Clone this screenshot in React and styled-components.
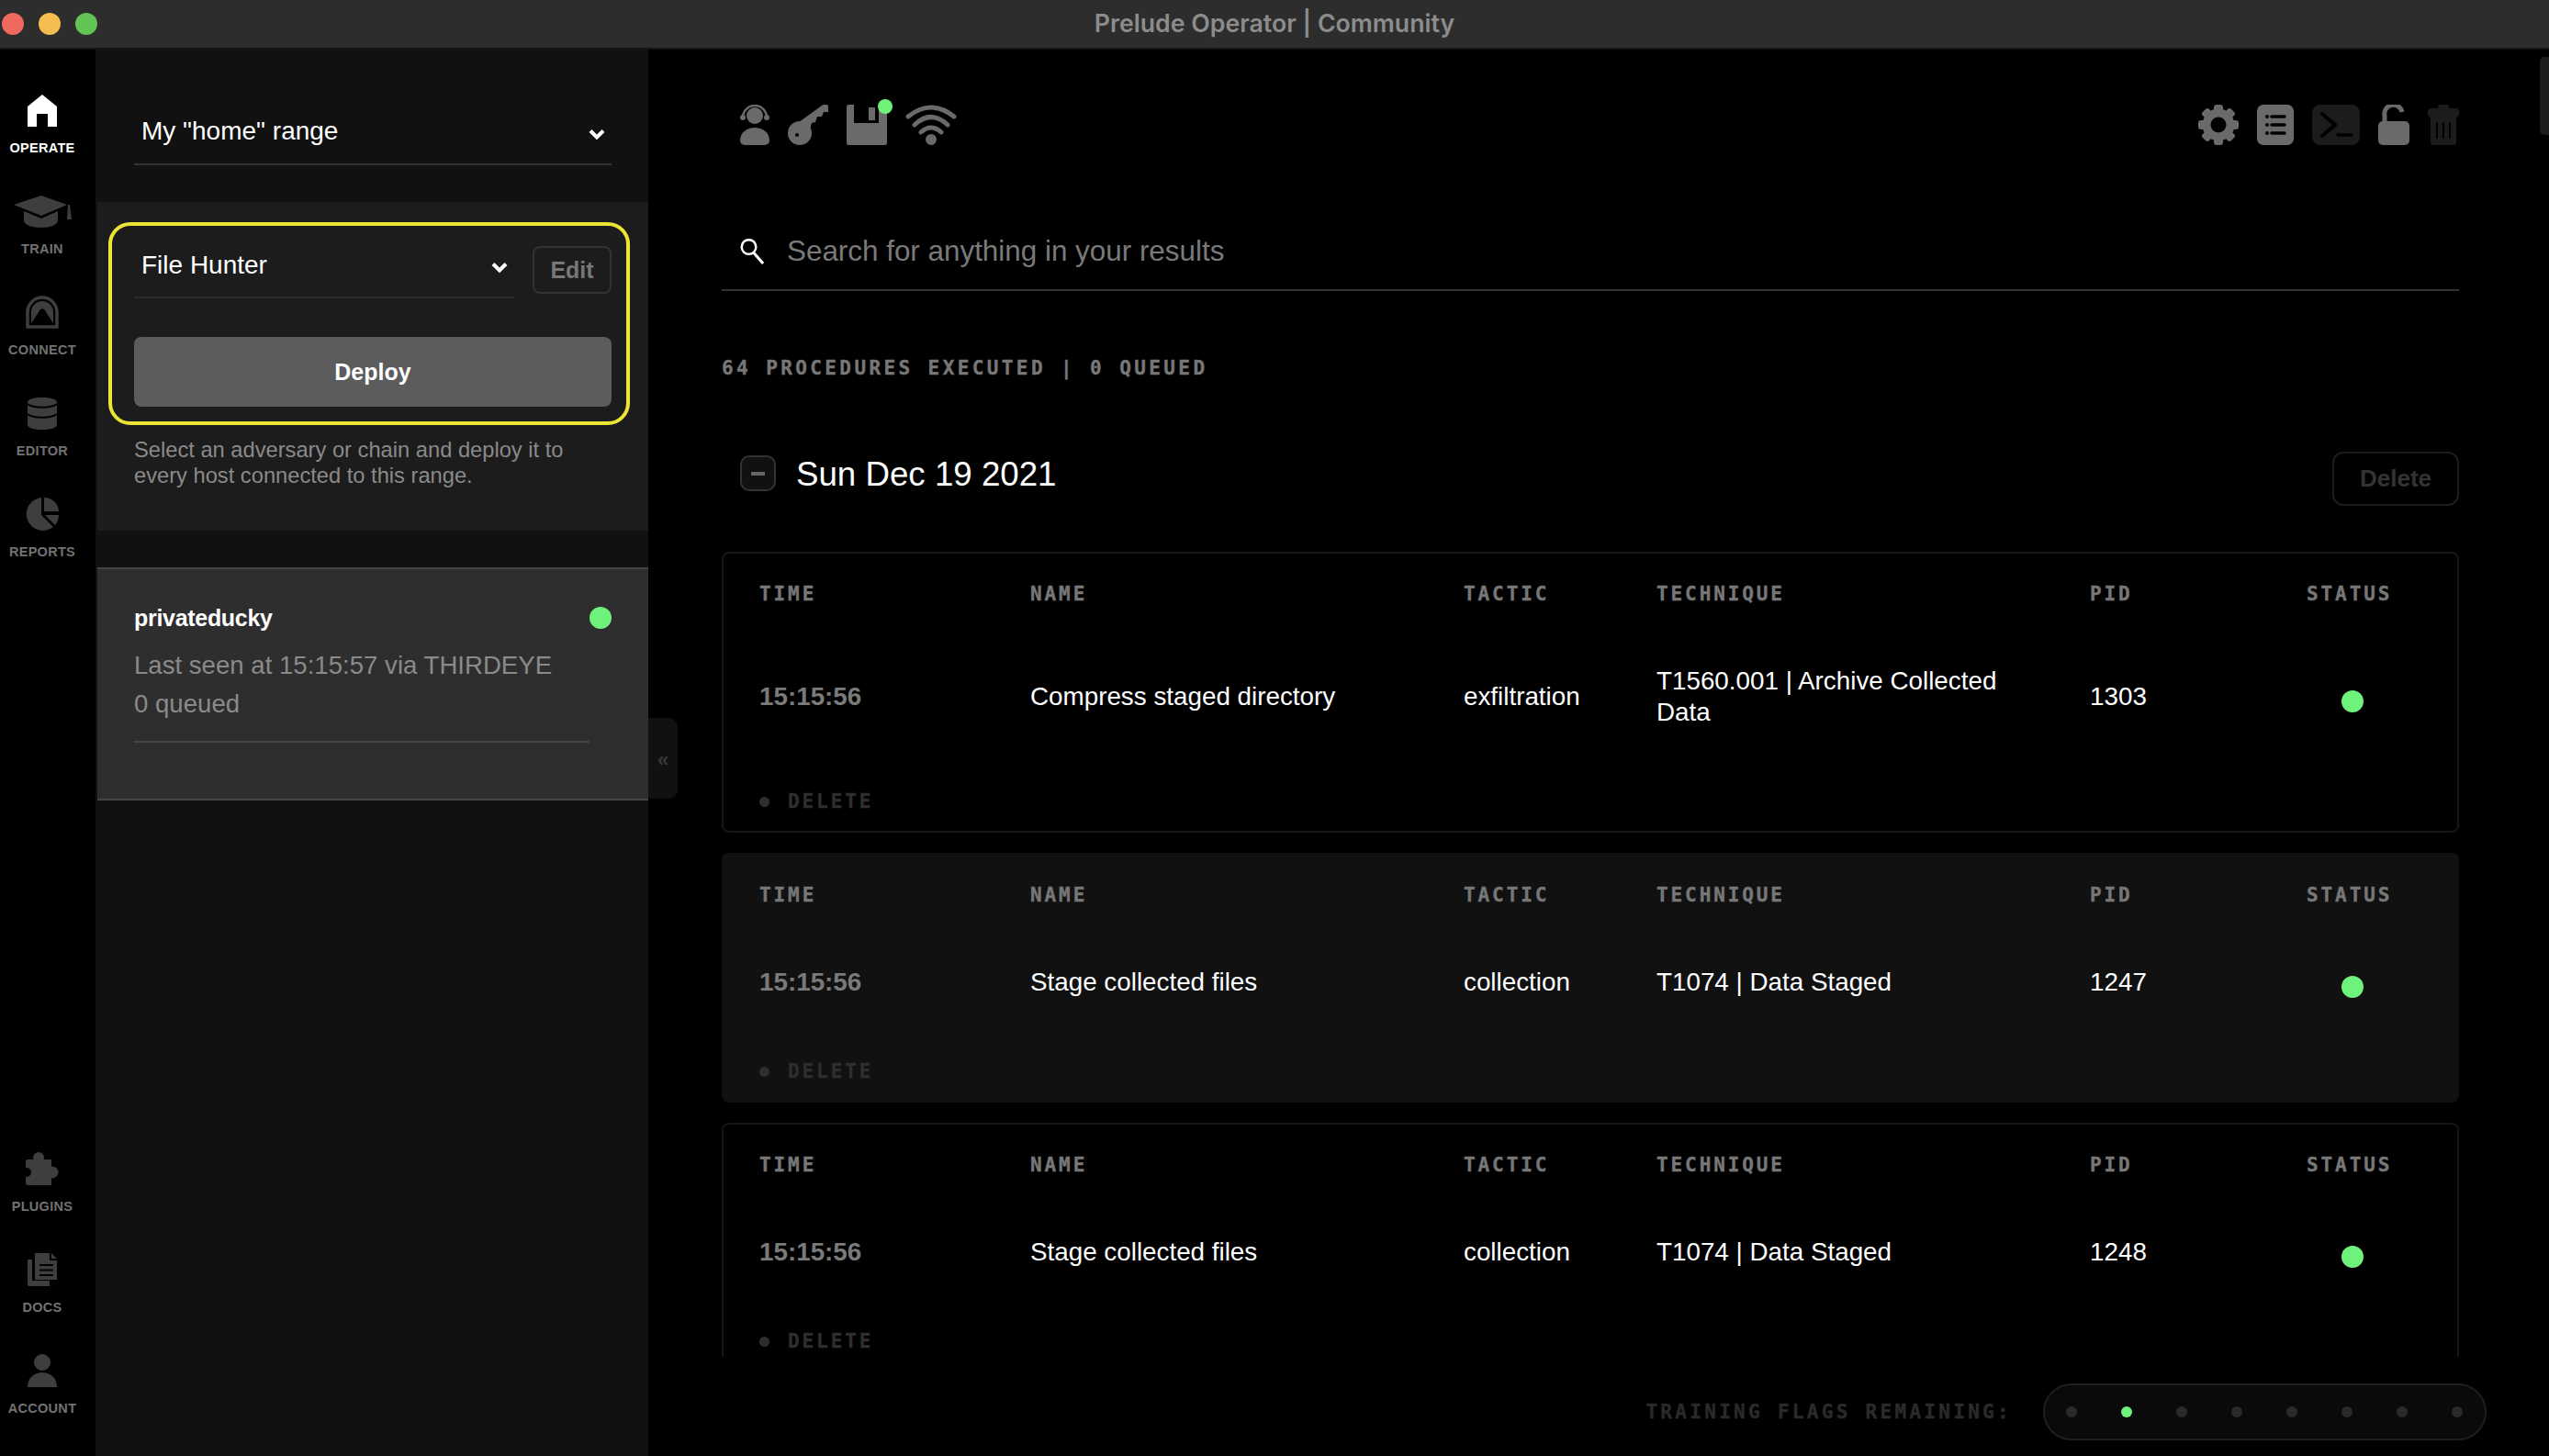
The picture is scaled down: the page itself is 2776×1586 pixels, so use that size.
import React from 'react'
import styled, { createGlobalStyle } from 'styled-components'

const GRAY = '#6a6a6a'
const DIM = '#1c1c1c'
const NAV = '#3e3e3e'

const navTop = [
  { label: 'OPERATE', icon: HomeIcon, active: true },
  { label: 'TRAIN', icon: CapIcon },
  { label: 'CONNECT', icon: TunnelIcon },
  { label: 'EDITOR', icon: DbIcon },
  { label: 'REPORTS', icon: PieIcon },
]

const navBottom = [
  { label: 'PLUGINS', icon: PuzzleIcon },
  { label: 'DOCS', icon: DocsIcon },
  { label: 'ACCOUNT', icon: PersonIcon },
]

const links = [
  { time: '15:15:56', name: 'Compress staged directory', tactic: 'exfiltration', technique: 'T1560.001 | Archive Collected Data', pid: '1303' },
  { time: '15:15:56', name: 'Stage collected files', tactic: 'collection', technique: 'T1074 | Data Staged', pid: '1247', shaded: true },
  { time: '15:15:56', name: 'Stage collected files', tactic: 'collection', technique: 'T1074 | Data Staged', pid: '1248' },
]

function App() {
  return (
    <Window>
      <GlobalStyle />
      <TitleBar>
        <Lights>
          <Light color="#ee6a5f" />
          <Light color="#f5bd4f" />
          <Light color="#61c454" />
        </Lights>
        <WindowTitle>Prelude Operator | Community</WindowTitle>
      </TitleBar>
      <Body>
        <Sidebar>
          <NavGroup>
            {navTop.map(item => <NavEntry key={item.label} {...item} />)}
          </NavGroup>
          <NavGroup>
            {navBottom.map(item => <NavEntry key={item.label} {...item} />)}
          </NavGroup>
        </Sidebar>

        <Panel>
          <RangeSection>
            <Select>
              My "home" range
              <Chevron />
            </Select>
          </RangeSection>
          <DeploySection>
            <Highlight>
              <ChainRow>
                <ChainSelect>
                  File Hunter
                  <Chevron />
                </ChainSelect>
                <EditButton>Edit</EditButton>
              </ChainRow>
              <DeployButton>Deploy</DeployButton>
            </Highlight>
            <Hint>Select an adversary or chain and deploy it to every host connected to this range.</Hint>
          </DeploySection>
          <HostCard>
            <HostHead>
              <HostName>privateducky</HostName>
              <HostDot />
            </HostHead>
            <HostLine>Last seen at 15:15:57 via THIRDEYE</HostLine>
            <HostLine>0 queued</HostLine>
            <HostRule />
          </HostCard>
          <CollapseTab>«</CollapseTab>
        </Panel>

        <Main>
          <ScrollThumb />
          <Toolbar>
            <ToolGroup>
              <HeadsetIcon />
              <KeyIcon />
              <SaveWrap>
                <FloppyIcon />
                <SaveDot />
              </SaveWrap>
              <WifiIcon />
            </ToolGroup>
            <ToolGroup>
              <GearIcon />
              <ListIcon />
              <TerminalIcon />
              <LockIcon />
              <TrashIcon />
            </ToolGroup>
          </Toolbar>

          <SearchRow>
            <SearchIcon />
            <SearchText>Search for anything in your results</SearchText>
          </SearchRow>

          <Stats>64 PROCEDURES EXECUTED | 0 QUEUED</Stats>

          <DateRow>
            <Toggle><ToggleBar /></Toggle>
            <DateTitle>Sun Dec 19 2021</DateTitle>
            <DeleteDay>Delete</DeleteDay>
          </DateRow>

          <Feed>
            {links.map(link => (
              <LinkCard key={link.pid} $shaded={link.shaded}>
                <Grid>
                  <Label>TIME</Label>
                  <Label>NAME</Label>
                  <Label>TACTIC</Label>
                  <Label>TECHNIQUE</Label>
                  <Label>PID</Label>
                  <Label>STATUS</Label>
                </Grid>
                <ValueGrid>
                  <TimeCell>{link.time}</TimeCell>
                  <Cell>{link.name}</Cell>
                  <Cell>{link.tactic}</Cell>
                  <TechniqueCell>{link.technique}</TechniqueCell>
                  <Cell>{link.pid}</Cell>
                  <StatusCell><StatusDot /></StatusCell>
                </ValueGrid>
                <DeleteLink><DeleteBullet />DELETE</DeleteLink>
              </LinkCard>
            ))}
          </Feed>

          <Footer>
            <FlagsLabel>TRAINING FLAGS REMAINING:</FlagsLabel>
            <FlagsPill>
              {[0, 1, 2, 3, 4, 5, 6, 7].map(i => <Flag key={i} $on={i === 1} />)}
            </FlagsPill>
          </Footer>
        </Main>
      </Body>
    </Window>
  )
}

export default App

function NavEntry({ label, icon: Icon, active }) {
  return (
    <NavItem>
      <NavIconBox><Icon color={active ? '#ffffff' : NAV} /></NavIconBox>
      <NavLabel $active={active}>{label}</NavLabel>
    </NavItem>
  )
}

function Chevron() {
  return (
    <ChevronSvg width="18" height="12" viewBox="0 0 18 12">
      <path d="M2 2.5 L9 9.5 L16 2.5" fill="none" stroke="#fff" strokeWidth="4" />
    </ChevronSvg>
  )
}

function HomeIcon({ color }) {
  return (
    <svg width="32" height="35" viewBox="0 0 32 35">
      <path d="M16 0 L32 13 V35 H22 V21 H10 V35 H0 V13 Z" fill={color} />
    </svg>
  )
}

function CapIcon({ color }) {
  return (
    <svg width="64" height="35" viewBox="0 0 64 35">
      <path d="M31 0 L59 10 L31 22 L1 10 Z" fill={color} />
      <path d="M12 17 L31 25 L49 17 V27 C49 32 40 35 31 35 C22 35 12 32 12 27 Z" fill={color} />
      <path d="M60 10 H62 L64 26 H59 Z" fill={color} />
    </svg>
  )
}

function TunnelIcon({ color }) {
  return (
    <svg width="36" height="36" viewBox="0 0 36 36">
      <path d="M2 34 V18 A16 16 0 0 1 34 18 V34 Z" fill="none" stroke={color} strokeWidth="3.5" />
      <path d="M6 30 V18 A12 12 0 0 1 30 18 V30 L22 18 C20 13 16 13 14 18 Z" fill={color} />
    </svg>
  )
}

function DbIcon({ color }) {
  return (
    <svg width="32" height="35" viewBox="0 0 32 35">
      <path d="M0 5 C0 2 7 0 16 0 S32 2 32 5 V30 C32 33 25 35 16 35 S0 33 0 30 Z" fill={color} />
      <path d="M0 7 C5 12 27 12 32 7 M0 18 C5 23 27 23 32 18" fill="none" stroke="#000" strokeWidth="2" />
    </svg>
  )
}

function PieIcon({ color }) {
  return (
    <svg width="36" height="36" viewBox="0 0 36 36">
      <path d="M17 0 V19 L30 32 A18 18 0 1 1 17 0 Z" fill={color} />
      <path d="M20 0 A16 16 0 0 1 36 15 H20 Z" fill={color} />
      <path d="M21 19 H36 A18 18 0 0 1 32 30 Z" fill={color} />
    </svg>
  )
}

function PuzzleIcon({ color }) {
  return (
    <svg width="36" height="36" viewBox="0 0 36 36">
      <path d="M2 8 H28 V36 H2 a2 2 0 0 1 -2 -2 V10 a2 2 0 0 1 2 -2 Z" fill={color} />
      <circle cx="14" cy="6" r="6" fill={color} />
      <circle cx="29" cy="22" r="6.5" fill={color} />
      <circle cx="1" cy="22" r="5" fill="#000" />
    </svg>
  )
}

function DocsIcon({ color }) {
  return (
    <svg width="32" height="36" viewBox="0 0 32 36">
      <path d="M0 7 H5 V30 H24 V36 H2 a2 2 0 0 1 -2 -2 Z" fill={color} />
      <path d="M8 0 H24 V8 H32 V29 H8 Z M26 0 L32 6 H26 Z" fill={color} />
      <path d="M13 13 H28 M13 18.5 H28 M13 24 H28" stroke="#000" strokeWidth="2" />
    </svg>
  )
}

function PersonIcon({ color }) {
  return (
    <svg width="32" height="36" viewBox="0 0 32 36">
      <circle cx="16" cy="9" r="9" fill={color} />
      <path d="M0 36 C0 25 8 20 16 20 C24 20 32 25 32 36 Z" fill={color} />
    </svg>
  )
}

function HeadsetIcon() {
  return (
    <svg width="32" height="44" viewBox="0 0 32 44">
      <circle cx="16" cy="12" r="9" fill={GRAY} />
      <path d="M3 14 A13 13 0 0 1 29 14" fill="none" stroke={GRAY} strokeWidth="2.5" />
      <circle cx="3" cy="14" r="3" fill={GRAY} />
      <circle cx="29" cy="14" r="3" fill={GRAY} />
      <path d="M0 39 C0 30 8 25 16 25 C24 25 32 30 32 39 a5 5 0 0 1 -5 5 H5 a5 5 0 0 1 -5 -5 Z" fill={GRAY} />
    </svg>
  )
}

function KeyIcon() {
  return (
    <svg width="44" height="44" viewBox="0 0 44 44">
      <path d="M12 19 L37 1 a3 3 0 0 1 2 -1 H42 a2 2 0 0 1 2 2 V8 H39 L37 13 H32 L30 19 L26 20 L24 27 Z" fill={GRAY} />
      <circle cx="13" cy="31" r="13" fill={GRAY} />
      <circle cx="10" cy="33" r="2" fill="#000" />
    </svg>
  )
}

function FloppyIcon() {
  return (
    <svg width="44" height="44" viewBox="0 0 44 44">
      <path d="M2 0 H8 V20 H35 V0 H38 L44 6 V42 a2 2 0 0 1 -2 2 H2 a2 2 0 0 1 -2 -2 V2 a2 2 0 0 1 2 -2 Z" fill={GRAY} />
      <rect x="24" y="3" width="7" height="14" fill={GRAY} />
    </svg>
  )
}

function WifiIcon() {
  return (
    <svg width="56" height="44" viewBox="0 0 56 44">
      <path d="M3 13 Q28 -7 53 13 M10 22 Q28 5 46 22 M17 30 Q28 20 39 30" fill="none" stroke={GRAY} strokeWidth="5" strokeLinecap="round" />
      <circle cx="28" cy="38" r="6" fill={GRAY} />
    </svg>
  )
}

function GearIcon() {
  return (
    <svg width="44" height="44" viewBox="0 0 44 44">
      <circle cx="22" cy="22" r="13" fill="none" stroke={GRAY} strokeWidth="9" />
      {[0, 45, 90, 135, 180, 225, 270, 315].map(a => (
        <rect key={a} x="17" y="0" width="10" height="8" rx="3" fill={GRAY} transform={`rotate(${a} 22 22)`} />
      ))}
    </svg>
  )
}

function ListIcon() {
  return (
    <svg width="40" height="44" viewBox="0 0 40 44">
      <rect width="40" height="44" rx="7" fill={GRAY} />
      <path d="M16 13 H30 M16 22 H30 M16 31 H30" stroke="#000" strokeWidth="3.5" strokeLinecap="round" />
      <circle cx="11" cy="13" r="2" fill="#000" />
      <circle cx="11" cy="22" r="2" fill="#000" />
      <circle cx="11" cy="31" r="2" fill="#000" />
    </svg>
  )
}

function TerminalIcon() {
  return (
    <svg width="52" height="44" viewBox="0 0 52 44">
      <rect width="52" height="44" rx="9" fill={DIM} />
      <path d="M11 10 L25 22 L11 34" fill="none" stroke="#000" strokeWidth="4" strokeLinecap="round" strokeLinejoin="round" />
      <path d="M28 33 H43" stroke="#000" strokeWidth="3.5" strokeLinecap="round" />
    </svg>
  )
}

function LockIcon() {
  return (
    <svg width="34" height="44" viewBox="0 0 34 44">
      <rect y="18" width="34" height="26" rx="5" fill={GRAY} />
      <path d="M7 20 V12 A9.5 9.5 0 0 1 26 8" fill="none" stroke={GRAY} strokeWidth="5" />
    </svg>
  )
}

function TrashIcon() {
  return (
    <svg width="34" height="44" viewBox="0 0 34 44">
      <rect x="11" width="12" height="8" rx="3" fill={DIM} />
      <rect y="4" width="34" height="10" rx="4" fill={DIM} />
      <path d="M3 12 H31 V41 a3 3 0 0 1 -3 3 H6 a3 3 0 0 1 -3 -3 Z" fill={DIM} />
      <path d="M10 19 V37 M17 19 V37 M24 19 V37" stroke="#000" strokeWidth="2" />
    </svg>
  )
}

function SearchIcon() {
  return (
    <SearchSvg width="26" height="28" viewBox="0 0 26 28">
      <circle cx="9.5" cy="9" r="7.8" fill="none" stroke="#fff" strokeWidth="2.5" />
      <path d="M14.5 15 L25 27" stroke="#fff" strokeWidth="3" />
    </SearchSvg>
  )
}

const GlobalStyle = createGlobalStyle`
  html, body {
    margin: 0;
    height: 100%;
    background: #000;
    overflow: hidden;
  }
  * {
    box-sizing: border-box;
  }
`

const Window = styled.div`
  width: 2776px;
  height: 1586px;
  display: flex;
  flex-direction: column;
  background: #000;
  font-family: "Liberation Sans", Arial, sans-serif;
  color: #fff;
`

const TitleBar = styled.div`
  position: relative;
  height: 54px;
  flex: none;
  display: flex;
  align-items: center;
  justify-content: center;
  padding-bottom: 2px;
  background: #2d2d2d;
  border-bottom: 2px solid #141414;
`

const Lights = styled.div`
  position: absolute;
  left: 2px;
  top: 14px;
  display: flex;
  gap: 16px;
`

const Light = styled.span`
  width: 24px;
  height: 24px;
  border-radius: 50%;
  background: ${p => p.color};
`

const WindowTitle = styled.div`
  font-family: Inter, sans-serif;
  font-weight: 600;
  font-size: 26.7px;
  color: #8c8c8c;
`

const Body = styled.div`
  flex: 1;
  min-height: 0;
  display: flex;
`

const Sidebar = styled.nav`
  width: 104px;
  flex: none;
  display: flex;
  flex-direction: column;
  justify-content: space-between;
  padding: 48px 12px 41px 0;
  background: #000;
`

const NavGroup = styled.div`
  display: flex;
  flex-direction: column;
`

const NavItem = styled.div`
  height: 110px;
  display: flex;
  flex-direction: column;
  align-items: center;
  &:last-child {
    height: 70px;
  }
`

const NavIconBox = styled.div`
  height: 36px;
  display: flex;
  align-items: center;
  justify-content: center;
`

const NavLabel = styled.div`
  margin-top: 15px;
  font-size: 14.5px;
  line-height: 16px;
  font-weight: 700;
  letter-spacing: 0.3px;
  color: ${p => (p.$active ? '#fff' : '#727272')};
`

const Panel = styled.aside`
  position: relative;
  width: 602px;
  flex: none;
  padding-left: 2px;
  background: #111;
`

const RangeSection = styled.div`
  height: 166px;
  padding: 51px 40px 0;
`

const Select = styled.div`
  height: 75px;
  display: flex;
  align-items: center;
  justify-content: space-between;
  padding: 3px 7px 0 8px;
  font-size: 28px;
  color: #fff;
  border-bottom: 2px solid #333;
`

const ChevronSvg = styled.svg`
  flex: none;
  margin-top: 5px;
`

const DeploySection = styled.div`
  height: 358px;
  padding: 22px 20px 0 12px;
  background: #1c1c1c;
`

const Highlight = styled.div`
  height: 221px;
  padding: 4px 16px 0 24px;
  border: 4px solid #ece536;
  border-radius: 24px;
`

const ChainRow = styled.div`
  display: flex;
  justify-content: space-between;
  align-items: flex-start;
`

const ChainSelect = styled(Select)`
  width: 414px;
  padding-top: 4px;
  border-bottom-color: #2a2a2a;
`

const EditButton = styled.button`
  width: 86px;
  height: 52px;
  margin-top: 18px;
  padding: 0;
  background: transparent;
  border: 2px solid #333;
  border-radius: 8px;
  color: #777;
  font-family: inherit;
  font-size: 25px;
  font-weight: 700;
`

const DeployButton = styled.button`
  display: block;
  width: 100%;
  height: 76px;
  margin-top: 42px;
  border: 0;
  border-radius: 8px;
  background: #5c5c5c;
  color: #fff;
  font-family: inherit;
  font-size: 25px;
  font-weight: 700;
`

const Hint = styled.p`
  width: 500px;
  margin: 13px 0 0 28px;
  font-size: 23.7px;
  line-height: 28px;
  color: #8a8a8a;
`

const HostCard = styled.div`
  height: 254px;
  margin-top: 40px;
  padding: 37px 64px 0 40px;
  background: #2e2e2e;
  border-top: 2px solid #444;
  border-bottom: 2px solid #444;
`

const HostHead = styled.div`
  display: flex;
  justify-content: space-between;
  align-items: center;
  height: 32px;
  margin: 0 -24px 15px 0;
`

const HostName = styled.div`
  font-size: 25px;
  font-weight: 700;
  letter-spacing: -0.3px;
`

const HostDot = styled.span`
  width: 24px;
  height: 24px;
  border-radius: 50%;
  background: #6ef27c;
`

const HostLine = styled.div`
  font-size: 27.6px;
  line-height: 42px;
  color: #8a8a8a;
`

const HostRule = styled.div`
  height: 2px;
  margin-top: 19px;
  background: #444;
`

const CollapseTab = styled.div`
  position: absolute;
  left: 100%;
  top: 728px;
  width: 32px;
  height: 88px;
  padding-top: 4px;
  display: flex;
  align-items: center;
  justify-content: center;
  background: #111;
  border-radius: 0 10px 10px 0;
  color: #3a3a3a;
  font-size: 22px;
  font-weight: 700;
`

const Main = styled.main`
  position: relative;
  flex: 1;
  min-width: 0;
  display: flex;
  flex-direction: column;
  padding: 60px 98px 0 80px;
`

const ScrollThumb = styled.div`
  position: absolute;
  right: 0;
  top: 8px;
  width: 10px;
  height: 85px;
  background: #1c1c1c;
  border-radius: 5px 0 0 5px;
`

const Toolbar = styled.div`
  height: 44px;
  flex: none;
  display: flex;
  justify-content: space-between;
  padding: 0 0 0 20px;
`

const ToolGroup = styled.div`
  display: flex;
  gap: 20px;
`

const SaveWrap = styled.div`
  position: relative;
  height: 44px;
`

const SaveDot = styled.span`
  position: absolute;
  left: 34px;
  top: -6px;
  width: 16px;
  height: 16px;
  border-radius: 50%;
  background: #6ef27c;
`

const SearchRow = styled.div`
  flex: none;
  height: 69px;
  margin-top: 90px;
  display: flex;
  align-items: flex-start;
  padding: 0 0 15px 20px;
  border-bottom: 2px solid #333;
`

const SearchSvg = styled.svg`
  margin-top: 12px;
`

const SearchText = styled.div`
  margin-left: 25px;
  font-size: 31.4px;
  line-height: 52px;
  color: #7a7a7a;
`

const Stats = styled.div`
  flex: none;
  margin-top: 72px;
  font-family: "DejaVu Sans Mono", monospace;
  font-size: 21px;
  line-height: 24px;
  font-weight: 700;
  letter-spacing: 3.4px;
  color: #777;
  -webkit-text-stroke: 0.4px #777;
`

const DateRow = styled.div`
  flex: none;
  height: 59px;
  margin-top: 79px;
  display: flex;
  align-items: flex-start;
  padding-left: 20px;
`

const Toggle = styled.div`
  width: 39px;
  height: 39px;
  margin-top: 4px;
  display: flex;
  align-items: center;
  justify-content: center;
  background: #111;
  border: 2px solid #333;
  border-radius: 10px;
`

const ToggleBar = styled.span`
  width: 15px;
  height: 4px;
  background: #666;
`

const DateTitle = styled.div`
  margin: 2px 0 0 22px;
  font-size: 36.7px;
  line-height: 46px;
`

const DeleteDay = styled.button`
  width: 138px;
  height: 59px;
  margin-left: auto;
  padding: 0;
  background: transparent;
  border: 2px solid #1c1c1c;
  border-radius: 12px;
  color: #333;
  font-family: inherit;
  font-size: 26px;
  font-weight: 700;
`

const Feed = styled.div`
  flex: 1;
  min-height: 0;
  margin-top: 50px;
  display: flex;
  flex-direction: column;
  gap: 22px;
  overflow: hidden;
`

const LinkCard = styled.section`
  flex: none;
  padding: 33px 39px 22px;
  border: 2px solid ${p => (p.$shaded ? '#111' : '#161616')};
  border-radius: 8px;
  background: ${p => (p.$shaded ? '#111' : 'transparent')};
`

const Grid = styled.div`
  display: grid;
  grid-template-columns: 295px 472px 210px 472px 236px 1fr;
`

const ValueGrid = styled(Grid)`
  margin-top: 67px;
  align-items: center;
`

const Label = styled.div`
  font-family: "DejaVu Sans Mono", monospace;
  font-size: 21px;
  line-height: 22px;
  font-weight: 700;
  letter-spacing: 2.9px;
  color: #777;
  -webkit-text-stroke: 0.4px #777;
`

const Cell = styled.div`
  font-size: 27.8px;
  line-height: 34px;
`

const TimeCell = styled(Cell)`
  font-weight: 700;
  color: #7a7a7a;
`

const TechniqueCell = styled(Cell)`
  padding-right: 60px;
`

const StatusCell = styled.div`
  display: flex;
  justify-content: center;
  padding: 10px 26px 0 0;
`

const StatusDot = styled.span`
  width: 24px;
  height: 24px;
  border-radius: 50%;
  background: #6ef27c;
`

const DeleteLink = styled.div`
  display: flex;
  align-items: center;
  margin-top: 70px;
  font-family: "DejaVu Sans Mono", monospace;
  font-size: 21px;
  line-height: 20px;
  font-weight: 700;
  letter-spacing: 2.9px;
  color: #2e2e2e;
  -webkit-text-stroke: 0.4px #2e2e2e;
`

const DeleteBullet = styled.span`
  width: 11px;
  height: 11px;
  margin-right: 20px;
  border-radius: 50%;
  background: #2e2e2e;
`

const Footer = styled.div`
  flex: none;
  height: 108px;
  margin-right: -30px;
  padding-bottom: 17px;
  display: flex;
  align-items: flex-end;
  justify-content: flex-end;
  gap: 34px;
`

const FlagsLabel = styled.div`
  font-family: "DejaVu Sans Mono", monospace;
  font-size: 21px;
  line-height: 62px;
  font-weight: 700;
  letter-spacing: 3.3px;
  color: #2a2a2a;
  -webkit-text-stroke: 0.4px #2a2a2a;
`

const FlagsPill = styled.div`
  width: 483px;
  height: 62px;
  display: flex;
  align-items: center;
  gap: 48px;
  padding-left: 23px;
  background: #0a0a0a;
  border: 2px solid #1e1e1e;
  border-radius: 31px;
`

const Flag = styled.span`
  width: 12px;
  height: 12px;
  border-radius: 50%;
  background: ${p => (p.$on ? '#6ef27c' : '#2a2a2a')};
`
